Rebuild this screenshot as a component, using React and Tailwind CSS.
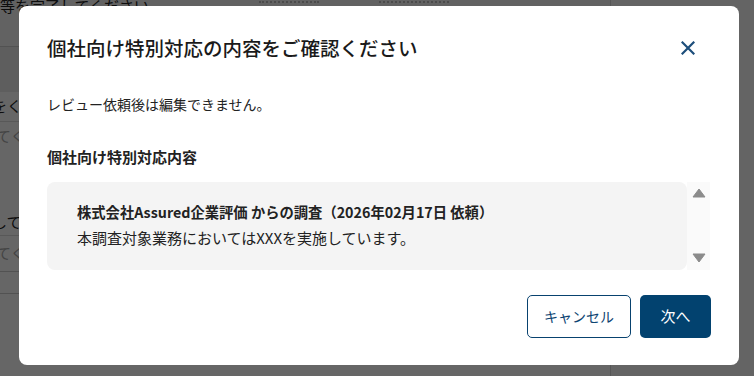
import React from "react";

const font = { fontFamily: '"Noto Sans CJK JP", "Noto Sans", sans-serif' };

function Background() {
  return (
    <div className="flex h-[376px] w-[754px] bg-white" style={font}>
      <div className="flex w-[611px] flex-col border-r border-[#d8d8d8]">
        <div className="flex h-[46px] items-start bg-[#f4f4f4] pl-0">
          <span className="-mt-[4px] text-[15px] leading-[20px] text-[#222]">等を完了してください</span>
          <span className="ml-[110px] mt-[1px] h-[3px] w-[60px] border-t-2 border-dotted border-[#bbb]"></span>
          <span className="ml-[60px] mt-[1px] h-[3px] w-[70px] border-t-2 border-dotted border-[#bbb]"></span>
        </div>
        <div className="h-[46px] border-t border-[#ccc] bg-[#ececec]"></div>
        <div className="flex h-[30px] items-center border-b border-[#ddd]">
          <span className="-ml-[8px] text-[15px] text-[#222]">をくだ</span>
        </div>
        <div className="flex h-[28px] items-center">
          <span className="-ml-[4px] text-[15px] text-[#aaa]">てくだ</span>
        </div>
        <div className="h-[60px]"></div>
        <div className="flex h-[26px] items-center border-b border-[#ddd]">
          <span className="-ml-[8px] text-[15px] text-[#222]">してく</span>
        </div>
        <div className="flex h-[36px] items-center border-b border-[#ccc]">
          <span className="-ml-[4px] text-[15px] text-[#aaa]">てくだ</span>
        </div>
        <div className="h-[22px] border-b border-[#ccc]"></div>
        <div className="flex-1"></div>
      </div>
      <div className="flex-1 bg-[#fafafa]"></div>
    </div>
  );
}

function ScrollArrow({ down }) {
  return (
    <svg width="14" height="10" viewBox="0 0 14 10">
      {down ? (
        <path d="M1 1 H13 L7 9 Z" fill="#8b8b8b" stroke="#8b8b8b" strokeWidth="1" strokeLinejoin="round" />
      ) : (
        <path d="M1 9 H13 L7 1 Z" fill="#8b8b8b" stroke="#8b8b8b" strokeWidth="1" strokeLinejoin="round" />
      )}
    </svg>
  );
}

export default function App() {
  return (
    <div className="relative h-[376px] w-[754px] overflow-hidden" style={font}>
      <Background />
      <div className="absolute inset-0 bg-black/60"></div>
      <div className="absolute left-[19px] top-[6px] flex h-[359px] w-[720px] flex-col rounded-[8px] bg-white px-[28px] pt-[28px]">
        <div className="flex h-[28px] items-center justify-between">
          <h2 className="text-[19.5px] font-medium leading-[28px] text-[#1a1a1a]">
            個社向け特別対応の内容をご確認ください
          </h2>
          <button className="mr-[13px] flex h-[20px] w-[20px] items-center justify-center">
            <svg width="14" height="14" viewBox="0 0 14 14">
              <path d="M1.5 1.5 L12.5 12.5 M12.5 1.5 L1.5 12.5" stroke="#1d4e7b" strokeWidth="2.2" strokeLinecap="square" />
            </svg>
          </button>
        </div>
        <p className="mt-[32px] text-[14px] leading-[20px] text-[#222]">レビュー依頼後は編集できません。</p>
        <h3 className="mt-[32px] text-[15px] font-bold leading-[22px] text-[#222]">個社向け特別対応内容</h3>
        <div className="mt-[14px] flex h-[88px] w-[663px]">
          <div className="flex-1 rounded-[8px] bg-[#f4f4f4] pb-[19px] pl-[30px] pt-[17px]">
            <div className="text-[14.3px] font-bold leading-[26px] text-[#222]">
              株式会社Assured企業評価 からの調査（2026年02月17日 依頼）
            </div>
            <div className="text-[15px] leading-[26px] text-[#222]">本調査対象業務においてはXXXを実施しています。</div>
          </div>
          <div className="flex w-[23px] flex-col items-center justify-between bg-[#fafafa] pb-[7px] pt-[6px]">
            <ScrollArrow />
            <ScrollArrow down />
          </div>
        </div>
        <div className="mt-[25px] flex justify-end gap-[9px]">
          <button className="flex h-[43px] w-[104px] items-center justify-center rounded-[5px] border border-[#08426f] bg-white text-[14px] text-[#0d4472]">
            キャンセル
          </button>
          <button className="flex h-[43px] w-[71px] items-center justify-center rounded-[5px] bg-[#02426f] text-[15px] text-white">
            次へ
          </button>
        </div>
      </div>
    </div>
  );
}
